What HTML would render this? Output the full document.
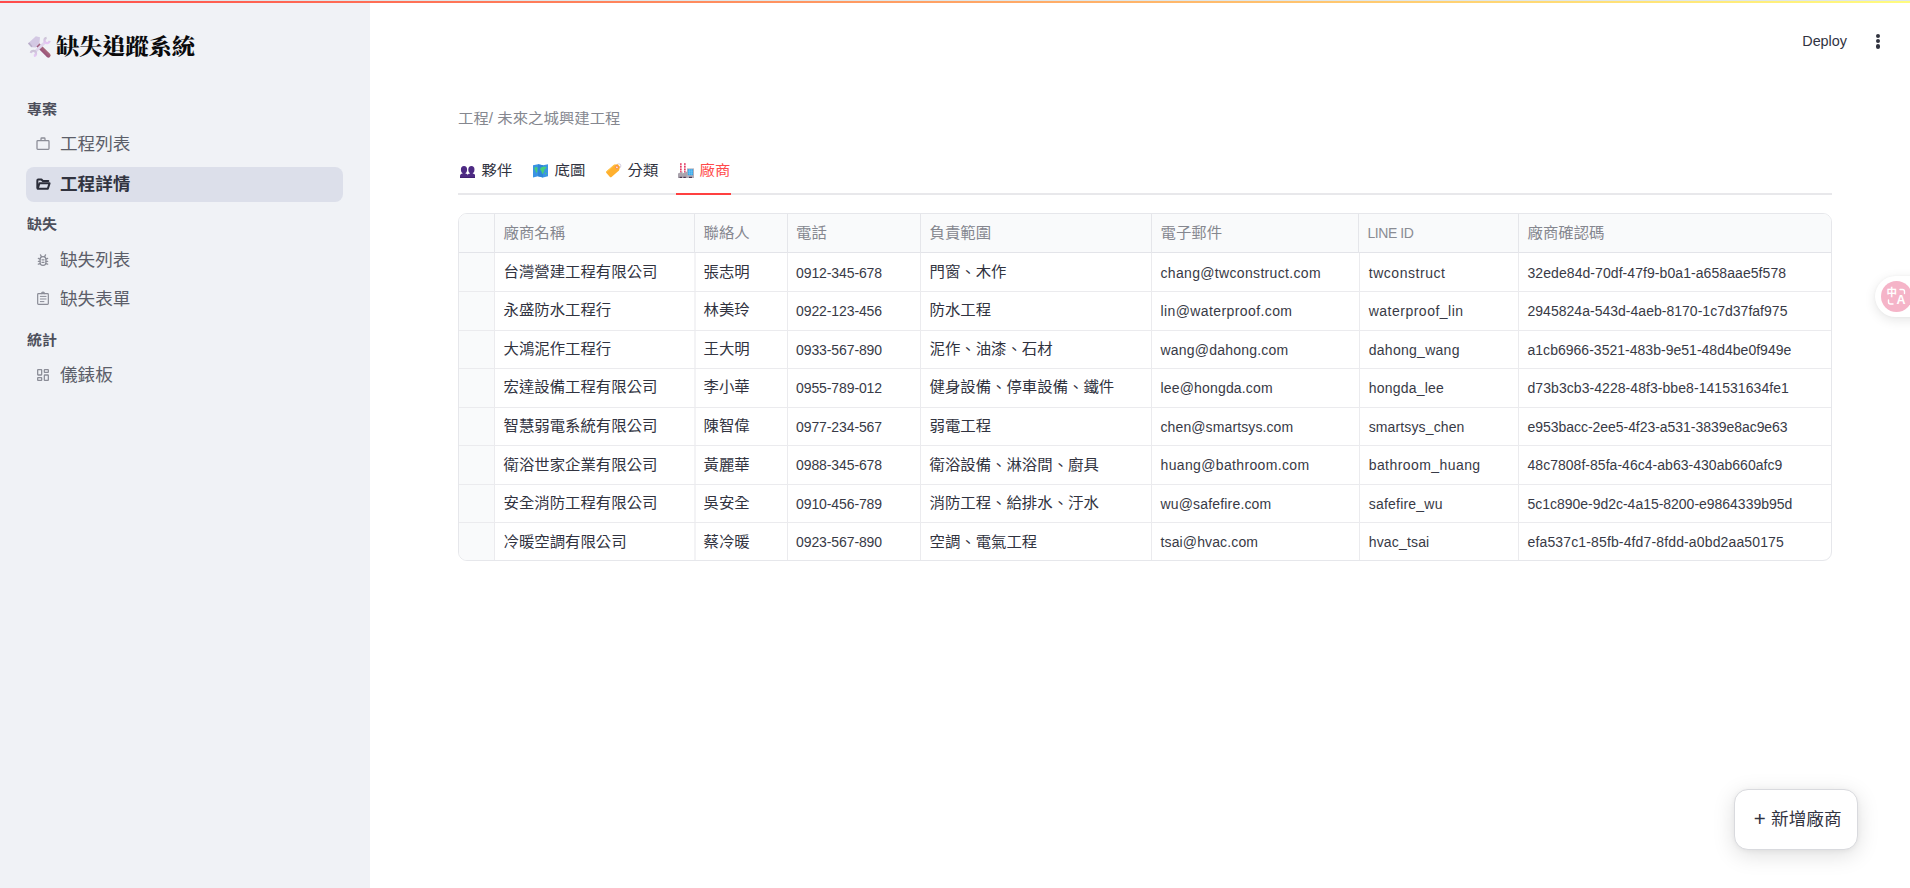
<!DOCTYPE html>
<html lang="zh-Hant">
<head>
<meta charset="utf-8">
<title>缺失追蹤系統</title>
<style>
*{box-sizing:border-box;margin:0;padding:0}
html,body{width:1910px;height:888px;overflow:hidden;background:#fff}
body{position:relative;font-family:"Liberation Sans","Noto Sans CJK TC",sans-serif;color:#31333f;-webkit-font-smoothing:antialiased}
.abs{position:absolute;white-space:nowrap}
#topbar{left:0;top:1px;width:1920px;height:2px;background:linear-gradient(90deg,#ff4b4b,#fffd80)}
#toprow{left:0;top:0;width:1910px;height:1px;background:#dfe7ea}
#sidebar{left:0;top:0;width:370px;height:888px;background:#f0f2f6}
#title{left:56.2px;top:29px;height:36px;line-height:36px;font-family:"Liberation Serif","Noto Serif CJK TC","Noto Serif CJK SC",serif;font-weight:900;font-size:23.1px;color:#0a0a0c;letter-spacing:0;transform:scaleY(.93)}
.sec{left:27px;height:22px;line-height:22px;font-size:15px;font-weight:700;color:#4d4f5b;transform:scaleY(.93);transform-origin:0 3px}
.nav{left:26px;width:317px;height:35px;border-radius:8px}
.nav span{position:absolute;left:34px;top:.9px;height:35px;line-height:34px;font-size:17.6px;color:#5c5e69;transform:scaleY(.96);transform-origin:0 9px}
.nav svg{position:absolute;left:9.3px;top:9px;width:16px;height:16px}
.nav.on{background:#dcdfea}
.nav.on span{font-weight:700;color:#31333f}
#crumb{left:458px;top:107px;height:24px;line-height:24px;font-size:15.4px;color:#85878f;transform:scaleY(.9)}
.tab{top:158.3px;height:24px;line-height:24px;font-size:15.4px;color:#31333f;transform:scaleY(.905)}
.tab.on{color:#ff4b4b}
#tabline{left:458px;top:193px;width:1374px;height:2px;background:#e8e8eb}
#tabon{left:676px;top:193px;width:55px;height:2px;background:#ff4040}
#grid{left:458px;top:213px;width:1374px;height:348px;border:1px solid #e6e7eb;border-radius:9px;overflow:hidden;background:#fff}
#grid .hd{position:absolute;left:0;top:0;width:100%;height:39px;background:#f9fafb;border-bottom:1px solid #e3e4e9}
#grid .c0{position:absolute;left:0;top:0;width:36px;height:100%;background:#f9fafb}
#grid .v{position:absolute;width:1px}
#grid .vh{top:0;height:39px;background:#e5e6ea}
#grid .vb{top:39px;height:307px;background:#ebebee}
#grid .h{position:absolute;left:0;width:100%;height:1px;background:#ebebee}
#grid .t{position:absolute;height:38px;line-height:38px;font-size:15.4px;color:#31333f;white-space:nowrap;transform:scaleY(.935);transform-origin:0 28px}
#grid .t.k{color:#85878f}
#grid .t.l{font-size:14px;transform:none;margin-top:1px;color:#383a46}
#grid .t.k.l{color:#8a8c94;margin-top:0}
#fab{left:1734px;top:789px;width:124px;height:61px;border-radius:14px;border:1px solid #d9dade;background:#fff;box-shadow:0 5px 22px rgba(0,0,0,.13),0 1px 5px rgba(0,0,0,.05)}
#fab span{position:absolute;top:0;height:58.5px;line-height:58.5px;font-size:17.6px;color:#31333f}
#fab .p{left:18.8px;font-size:20.5px;line-height:57px}
#fab .x{left:36.1px;transform:scaleY(.95);transform-origin:0 37px}
#deploy{left:1802.3px;top:30px;height:22px;line-height:22px;font-size:14.4px;letter-spacing:-.05px;color:#31333f}
#kebab i{position:absolute;left:1875.8px;width:4.4px;height:4.4px;border-radius:50%;background:#31333f}
#bubble{left:1875px;top:275.5px;width:60px;height:41px;border-radius:20.5px;background:#fff;box-shadow:0 3px 12px rgba(0,0,0,.10),0 0 3px rgba(0,0,0,.04)}
#bubble b{position:absolute;left:6px;top:5px;width:31px;height:31px;border-radius:50%;background:#f5b4c8}
#bubble span{position:absolute;color:#fff;font-weight:700;line-height:1}
#bubble .zh{left:11.5px;top:11.5px;font-size:10.5px}
#bubble .en{left:21.5px;top:18.5px;font-size:12.5px;font-weight:700}
#bubble svg{position:absolute;left:6px;top:5px;width:31px;height:31px}
</style>
</head>
<body>
<div id="sidebar" class="abs"></div>
<div id="toprow" class="abs"></div><div id="topbar" class="abs"></div>

<svg id="e-tools" class="abs" style="left:27px;top:35px;width:25px;height:24px" viewBox="0 0 25 24">
<defs><linearGradient id="hg" x1="0" y1="1" x2="1" y2="0"><stop offset="0" stop-color="#86357a"/><stop offset="1" stop-color="#b9857c"/></linearGradient>
<linearGradient id="wg" x1="0" y1="0" x2="0" y2="1"><stop offset="0" stop-color="#cbc4d6"/><stop offset="1" stop-color="#e6c6f5"/></linearGradient></defs>
<path d="M10.200 9.200L21.400 20.400" stroke="url(#hg)" stroke-width="4.400" stroke-linecap="round" fill="none"/>
<path d="M1 8.400L8.800 1.300 13 2.200 12.400 8.600 8.600 12.400 4.400 12.300z" fill="#d3c8e3"/>
<path d="M1 8.400L4.400 12.300 5.500 11.300 2.300 7.300z" fill="#b9aec9"/>
<path d="M8 16.800L18.400 7" stroke="#e0d6ed" stroke-width="2.900" fill="none"/>
<path d="M22.620 5.900A2.600 2.600 0 1 1 19.610 2.890" stroke="url(#wg)" stroke-width="2.300" fill="none"/>
<path d="M3.840 17.950A2.600 2.600 0 1 1 6.850 20.960" stroke="url(#wg)" stroke-width="2.300" fill="none"/>
</svg>
<div id="title" class="abs">缺失追蹤系統</div>

<div class="sec abs" style="top:99px">專案</div>
<div class="nav abs" style="top:127px"><svg viewBox="0 0 24 24" fill="none" stroke="#8b8d97" stroke-width="1.9" stroke-linejoin="round"><rect x="3" y="7" width="18" height="13" rx="1.2"/><path d="M9 7V4.2a1.2 1.2 0 0 1 1.2-1.2h3.6a1.2 1.2 0 0 1 1.2 1.2V7"/></svg><span>工程列表</span></div>
<div class="nav on abs" style="top:167px"><svg viewBox="0 0 24 24" fill="none" stroke="#2b2d39" stroke-width="3" stroke-linejoin="round" stroke-linecap="round"><path d="M20 7.5h-8.2L9.6 5.3H4.8a1.3 1.3 0 0 0-1.3 1.3v10.9"/><path d="M4 19l2.6-8h15.2l-2.5 8z"/></svg><span>工程詳情</span></div>
<div class="sec abs" style="top:214px">缺失</div>
<div class="nav abs" style="top:243px"><svg viewBox="0 0 24 24" fill="none" stroke="#8b8d97" stroke-width="1.9" stroke-linecap="round"><rect x="7.600" y="7" width="8.800" height="13" rx="4.200"/><path d="M5 9.700L7.600 10.600M5 14H7.600M5 18.300L7.600 17.400M16.400 10.600l2.600-.9M16.400 14h2.600M16.400 17.400l2.600.9M9.800 7.200L8.200 4.300M14.200 7.200l1.600-2.900M10.500 11.700h3M10.500 15.500h3"/></svg><span>缺失列表</span></div>
<div class="nav abs" style="top:282px"><svg viewBox="0 0 24 24" fill="none" stroke="#8b8d97" stroke-width="1.8" stroke-linecap="round" stroke-linejoin="round"><rect x="4" y="4" width="16" height="16" rx="1.2"/><path d="M9.900 3.800a2.100 2.100 0 0 1 4.200 0"/><path d="M8 8.100h8.600M8 12h8.600M8 15.900h5.400" stroke-width="1.500"/></svg><span>缺失表單</span></div>
<div class="sec abs" style="top:330px">統計</div>
<div class="nav abs" style="top:358px"><svg viewBox="0 0 24 24" fill="none" stroke="#8b8d97" stroke-width="1.9" stroke-linejoin="round"><rect x="4" y="4" width="6" height="8" rx=".6"/><rect x="14" y="4" width="6" height="4" rx=".6"/><rect x="4" y="16" width="6" height="4" rx=".6"/><rect x="14" y="12" width="6" height="8" rx=".6"/></svg><span>儀錶板</span></div>

<div id="crumb" class="abs">工程/ 未來之城興建工程</div>

<svg class="abs" style="left:460px;top:166px;width:15.4px;height:12.2px" viewBox="0 0 15.4 12.2">
<g fill="#4d2a83"><ellipse cx="4" cy="3.7" rx="3.1" ry="3.6"/><path d="M0 12.2V10.1C0 8.6 1 7.9 2.6 7.6h2.8C7 7.9 8 8.6 8 10.1v2.1z"/><rect x="2.6" y="6" width="2.8" height="3"/>
<ellipse cx="11.4" cy="3.7" rx="3.1" ry="3.6"/><path d="M7.4 12.2V10.1c0-1.500 1-2.200 2.600-2.500h2.800c1.600.3 2.600 1 2.600 2.500v2.100z"/><rect x="10" y="6" width="2.800" height="3"/></g>
<path d="M0 11.300h15.400v.9H0z" fill="#3c1d6c"/>
</svg><svg class="abs" style="left:533px;top:164px;width:15px;height:13.6px" viewBox="0 0 15 13.6">
<path d="M0 1.300L5 .2 10 1.300 15 .2V12.300L10 13.400 5 12.300 0 13.400z" fill="#3b93e3"/>
<path d="M5 .2L10 1.300V13.400L5 12.300z" fill="#2f86d8"/>
<path d="M1.600 3.600c1-.9 2.400-.6 3 .1.300 1-.6 1.500-.3 2.500.4 1.100-.4 2.300-1.100 2.800-.5-.9-.3-2-1-2.700-.6-.7-.9-1.800-.6-2.700z" fill="#45cf7a"/>
<path d="M7.200 4.800c.5-1.400 1.900-2.200 3.600-2 1.200.1 2.100-.2 2.800.4-.2 1.100-1.300 1.300-1.900 2.100-.6.900-.2 2-1 2.800-.5.600-.4 1.500-1.200 1.900-.8-.7-.5-1.800-1-2.600-.5-.8-1.500-1.500-1.300-2.600z" fill="#45cf7a"/>
<path d="M12.200 8.800c.6-.3 1.300.1 1.300.8 0 .7-.8 1-1.300.6-.4-.4-.4-1.100 0-1.400z" fill="#45cf7a"/>
</svg><svg class="abs" style="left:605px;top:163px;width:17px;height:15px" viewBox="0 0 17 15">
<circle cx="13.800" cy="2.900" r="2.100" fill="none" stroke="#cfc8dd" stroke-width=".9"/>
<g transform="translate(8.800 6.900) rotate(-41)"><path d="M-7.600-2.500a1.300 1.300 0 0 1 1.300-1.300H3.600L6.700-1.700V1.700L3.600 3.800H-6.300a1.300 1.300 0 0 1-1.300-1.300z" fill="#ffb02e"/><path d="M-7.600-2.500a1.300 1.300 0 0 1 1.300-1.300H3.600L5-2.850H-7.600z" fill="#ffc64d"/><circle cx="4.100" cy="0" r="1.250" fill="#fff" stroke="#f2643c" stroke-width=".7"/></g>
</svg><svg class="abs" style="left:678px;top:162.500px;width:16px;height:15.600px" viewBox="0 0 16 15.600">
<rect x="2" y=".3" width="1.600" height="9.700" fill="#f7b9c8"/><rect x="6" y=".3" width="1.600" height="9.700" fill="#f7b9c8"/>
<g fill="#e23a63"><rect x="2" y=".3" width="1.600" height="1.500"/><rect x="2" y="3" width="1.600" height="1.500"/><rect x="2" y="5.700" width="1.600" height="1.500"/><rect x="2" y="8.200" width="1.600" height="1.200"/><rect x="6" y=".3" width="1.600" height="1.500"/><rect x="6" y="3" width="1.600" height="1.500"/><rect x="6" y="5.700" width="1.600" height="1.500"/><rect x="6" y="8.200" width="1.600" height="1.200"/></g>
<path d="M0 15.600V10.400L4.500 8.400V10.400L9 8.400V15.600z" fill="#aaa3ad"/>
<rect x="9" y="5.400" width="7" height="10.200" fill="#b4aeb8"/>
<rect x="9.800" y="6.200" width="5.200" height="6" fill="#35a7ea"/>
<path d="M9.800 8.200h5.200M9.800 10.200h5.200M11.500 6.200v6M13.300 6.200v6" stroke="#8fd3f7" stroke-width=".45"/>
<g fill="#47354f"><rect x="1.600" y="13.800" width="2.400" height="1.800"/><rect x="5.400" y="13.800" width="2.400" height="1.800"/><rect x="11" y="13.800" width="3" height="1.800"/></g>
</svg>
<div class="tab abs" style="left:481.6px">夥伴</div>
<div class="tab abs" style="left:554.5px">底圖</div>
<div class="tab abs" style="left:627.5px">分類</div>
<div class="tab on abs" style="left:699.6px">廠商</div>
<div id="tabline" class="abs"></div>
<div id="tabon" class="abs"></div>

<div id="grid" class="abs">
<div class="c0"></div><div class="hd"></div>
<!--GS-->
<div class="v vh" style="left:35px"></div>
<div class="v vh" style="left:235px"></div>
<div class="v vh" style="left:328px"></div>
<div class="v vh" style="left:461px"></div>
<div class="v vh" style="left:692px"></div>
<div class="v vh" style="left:899px"></div>
<div class="v vh" style="left:1059px"></div>
<div class="v vb" style="left:35px"></div>
<div class="v vb" style="left:235px;width:2px;background:#f3f3f5"></div>
<div class="v vb" style="left:328px"></div>
<div class="v vb" style="left:461px"></div>
<div class="v vb" style="left:692px"></div>
<div class="v vb" style="left:900px"></div>
<div class="v vb" style="left:1059px"></div>
<div class="h" style="top:77px"></div>
<div class="h" style="top:116px"></div>
<div class="h" style="top:154px"></div>
<div class="h" style="top:193px"></div>
<div class="h" style="top:231px"></div>
<div class="h" style="top:270px"></div>
<div class="h" style="top:308px"></div>
<div class="t k" style="left:44.5px;top:0.3px">廠商名稱</div>
<div class="t k" style="left:244.5px;top:0.3px">聯絡人</div>
<div class="t k" style="left:337.1px;top:0.3px">電話</div>
<div class="t k" style="left:470.5px;top:0.3px">負責範圍</div>
<div class="t k" style="left:701.5px;top:0.3px">電子郵件</div>
<div class="t k l" style="left:908.5px;top:0.3px;letter-spacing:-0.43px">LINE ID</div>
<div class="t k" style="left:1068.5px;top:0.3px">廠商確認碼</div>
<div class="t" style="left:44.5px;top:38.5px">台灣營建工程有限公司</div>
<div class="t" style="left:244.5px;top:38.5px">張志明</div>
<div class="t l" style="left:337.1px;top:38.5px;letter-spacing:-0.11px">0912-345-678</div>
<div class="t" style="left:470.5px;top:38.5px">門窗、木作</div>
<div class="t l" style="left:701.5px;top:38.5px;letter-spacing:0.33px">chang@twconstruct.com</div>
<div class="t l" style="left:909.7px;top:38.5px;letter-spacing:0.55px">twconstruct</div>
<div class="t l" style="left:1068.5px;top:38.5px;letter-spacing:0.07px">32ede84d-70df-47f9-b0a1-a658aae5f578</div>
<div class="t" style="left:44.5px;top:77.1px">永盛防水工程行</div>
<div class="t" style="left:244.5px;top:77.1px">林美玲</div>
<div class="t l" style="left:337.1px;top:77.0px;letter-spacing:-0.11px">0922-123-456</div>
<div class="t" style="left:470.5px;top:77.1px">防水工程</div>
<div class="t l" style="left:701.5px;top:77.0px;letter-spacing:0.40px">lin@waterproof.com</div>
<div class="t l" style="left:909.7px;top:77.0px;letter-spacing:0.50px">waterproof_lin</div>
<div class="t l" style="left:1068.5px;top:77.0px;letter-spacing:0.02px">2945824a-543d-4aeb-8170-1c7d37faf975</div>
<div class="t" style="left:44.5px;top:115.7px">大鴻泥作工程行</div>
<div class="t" style="left:244.5px;top:115.7px">王大明</div>
<div class="t l" style="left:337.1px;top:115.5px;letter-spacing:-0.11px">0933-567-890</div>
<div class="t" style="left:470.5px;top:115.7px">泥作、油漆、石材</div>
<div class="t l" style="left:701.5px;top:115.5px;letter-spacing:0.21px">wang@dahong.com</div>
<div class="t l" style="left:909.7px;top:115.5px;letter-spacing:0.28px">dahong_wang</div>
<div class="t l" style="left:1068.5px;top:115.5px;letter-spacing:0.02px">a1cb6966-3521-483b-9e51-48d4be0f949e</div>
<div class="t" style="left:44.5px;top:154.3px">宏達設備工程有限公司</div>
<div class="t" style="left:244.5px;top:154.3px">李小華</div>
<div class="t l" style="left:337.1px;top:154.0px;letter-spacing:-0.11px">0955-789-012</div>
<div class="t" style="left:470.5px;top:154.3px">健身設備、停車設備、鐵件</div>
<div class="t l" style="left:701.5px;top:154.0px;letter-spacing:0.17px">lee@hongda.com</div>
<div class="t l" style="left:909.7px;top:154.0px;letter-spacing:0.22px">hongda_lee</div>
<div class="t l" style="left:1068.5px;top:154.0px;letter-spacing:0.06px">d73b3cb3-4228-48f3-bbe8-141531634fe1</div>
<div class="t" style="left:44.5px;top:192.9px">智慧弱電系統有限公司</div>
<div class="t" style="left:244.5px;top:192.9px">陳智偉</div>
<div class="t l" style="left:337.1px;top:192.5px;letter-spacing:-0.11px">0977-234-567</div>
<div class="t" style="left:470.5px;top:192.9px">弱電工程</div>
<div class="t l" style="left:701.5px;top:192.5px;letter-spacing:0.11px">chen@smartsys.com</div>
<div class="t l" style="left:909.7px;top:192.5px;letter-spacing:0.13px">smartsys_chen</div>
<div class="t l" style="left:1068.5px;top:192.5px;letter-spacing:-0.04px">e953bacc-2ee5-4f23-a531-3839e8ac9e63</div>
<div class="t" style="left:44.5px;top:231.6px">衛浴世家企業有限公司</div>
<div class="t" style="left:244.5px;top:231.6px">黃麗華</div>
<div class="t l" style="left:337.1px;top:231.0px;letter-spacing:-0.11px">0988-345-678</div>
<div class="t" style="left:470.5px;top:231.6px">衛浴設備、淋浴間、廚具</div>
<div class="t l" style="left:701.5px;top:231.0px;letter-spacing:0.35px">huang@bathroom.com</div>
<div class="t l" style="left:909.7px;top:231.0px;letter-spacing:0.43px">bathroom_huang</div>
<div class="t l" style="left:1068.5px;top:231.0px;letter-spacing:0.03px">48c7808f-85fa-46c4-ab63-430ab660afc9</div>
<div class="t" style="left:44.5px;top:270.2px">安全消防工程有限公司</div>
<div class="t" style="left:244.5px;top:270.2px">吳安全</div>
<div class="t l" style="left:337.1px;top:269.5px;letter-spacing:-0.11px">0910-456-789</div>
<div class="t" style="left:470.5px;top:270.2px">消防工程、給排水、汙水</div>
<div class="t l" style="left:701.5px;top:269.5px;letter-spacing:0.17px">wu@safefire.com</div>
<div class="t l" style="left:909.7px;top:269.5px;letter-spacing:0.22px">safefire_wu</div>
<div class="t l" style="left:1068.5px;top:269.5px;letter-spacing:-0.02px">5c1c890e-9d2c-4a15-8200-e9864339b95d</div>
<div class="t" style="left:44.5px;top:308.8px">冷暖空調有限公司</div>
<div class="t" style="left:244.5px;top:308.8px">蔡冷暖</div>
<div class="t l" style="left:337.1px;top:308.0px;letter-spacing:-0.11px">0923-567-890</div>
<div class="t" style="left:470.5px;top:308.8px">空調、電氣工程</div>
<div class="t l" style="left:701.5px;top:308.0px;letter-spacing:0.13px">tsai@hvac.com</div>
<div class="t l" style="left:909.7px;top:308.0px;letter-spacing:0.17px">hvac_tsai</div>
<div class="t l" style="left:1068.5px;top:308.0px;letter-spacing:0.14px">efa537c1-85fb-4fd7-8fdd-a0bd2aa50175</div>
<!--GE-->
</div>

<div id="deploy" class="abs">Deploy</div>
<div id="kebab"><i style="top:33.6px"></i><i style="top:38.95px"></i><i style="top:44.3px"></i></div>

<div id="bubble" class="abs"><b></b><span class="zh">中</span><span class="en">A</span><svg viewBox="0 0 31 31" fill="none" stroke="#fff" stroke-width="1.4" stroke-linecap="round"><path d="M19 8.500h2.500a2 2 0 0 1 2 2v2"/><path d="M7.500 19v2a2 2 0 0 0 2 2h2.500"/></svg></div>

<div id="fab" class="abs"><span class="p">+</span><span class="x">新增廠商</span></div>
</body>
</html>
